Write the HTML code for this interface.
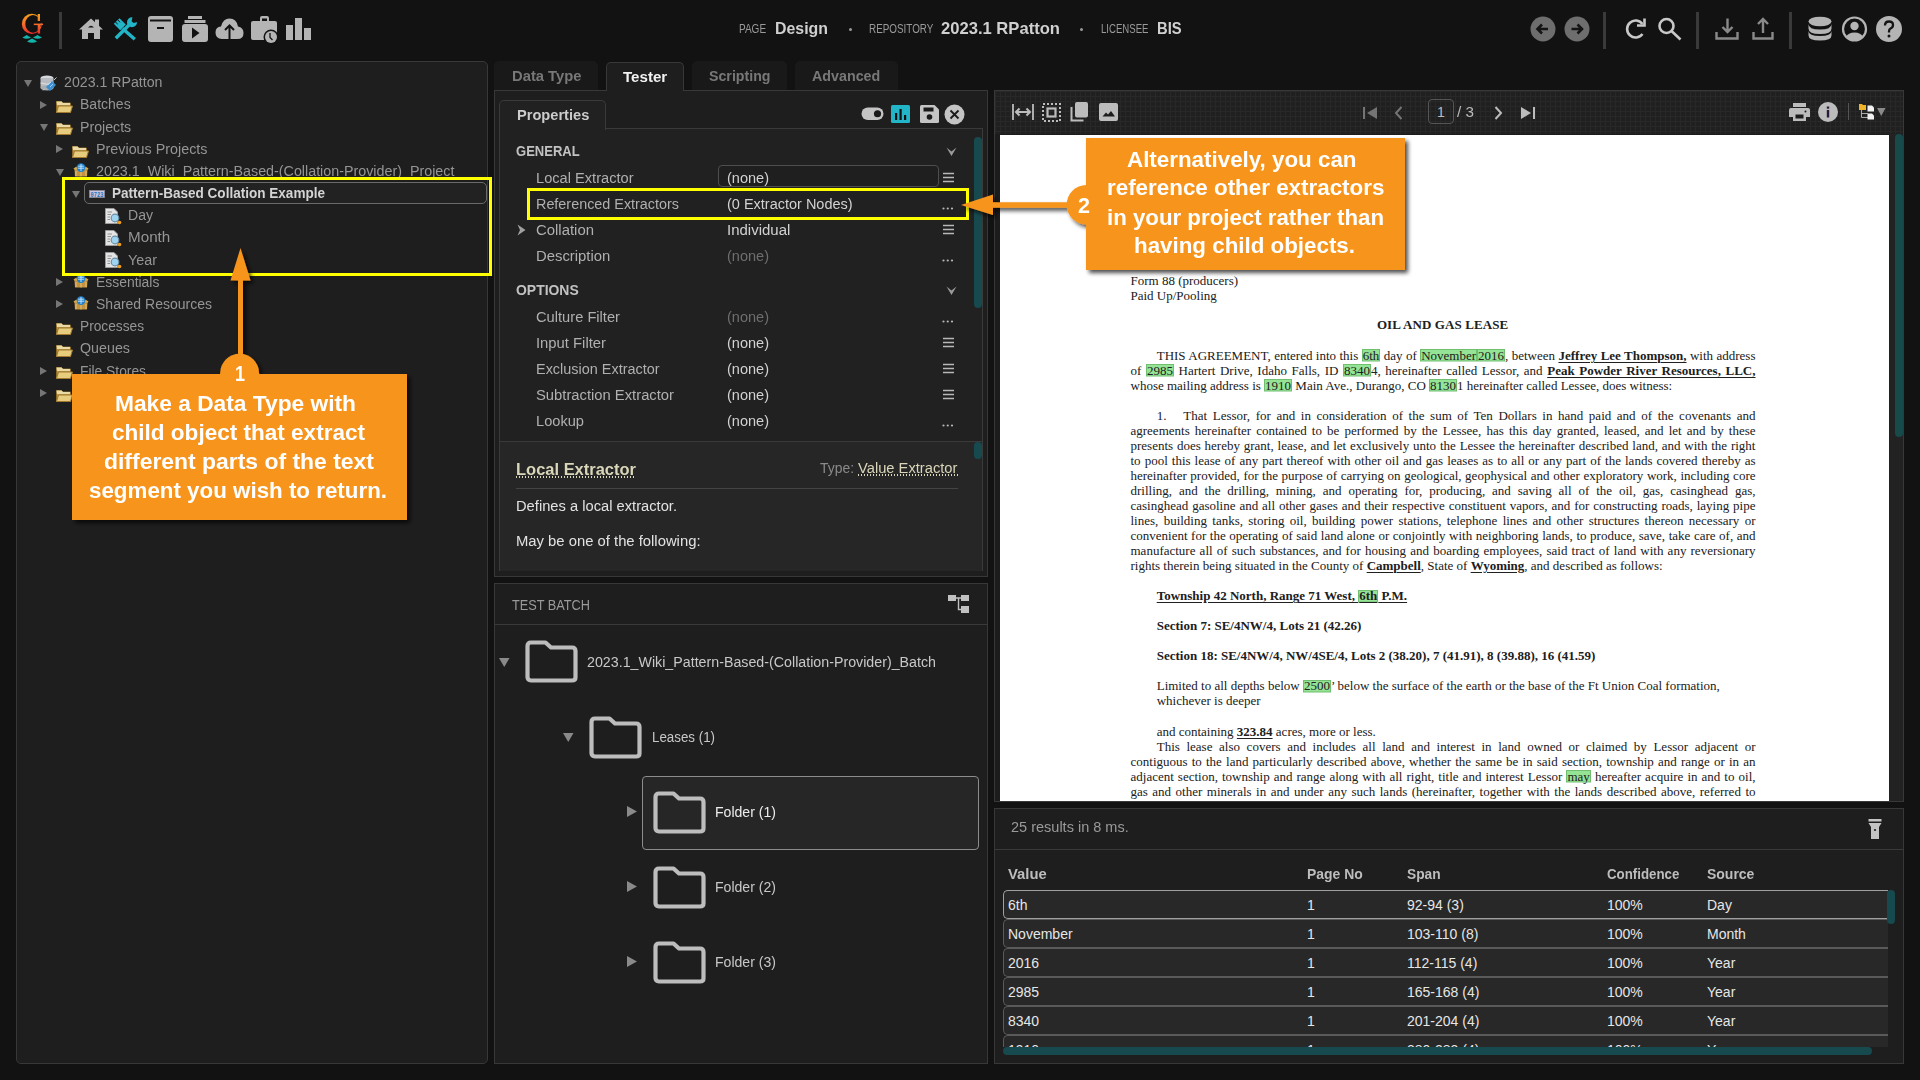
<!DOCTYPE html>
<html><head><meta charset="utf-8">
<style>
*{box-sizing:border-box;margin:0;padding:0}
html,body{width:1920px;height:1080px;overflow:hidden;background:#121212;font-family:"Liberation Sans",sans-serif;color:#aaa;position:relative}
.a{position:absolute}
.t{position:absolute;white-space:pre;transform-origin:0 50%}
svg{position:absolute;overflow:visible}
.grid{background-color:#202020;background-image:linear-gradient(#282828 1px,transparent 1px),linear-gradient(90deg,#282828 1px,transparent 1px);background-size:5px 5px}
.dl{position:absolute;white-space:nowrap;font-family:'Liberation Serif',serif;font-size:13px;line-height:16px;color:#202020}
.dj{text-align:justify;text-align-last:justify;white-space:normal}
.hl{background-image:linear-gradient(#95e395,#95e395),linear-gradient(#6fbf6f,#6fbf6f);background-size:calc(100% - 2px) 10.5px,100% 12.5px;background-position:1px 2.5px,0 1.5px;background-repeat:no-repeat;padding:0 1px}
.bu{font-weight:700;text-decoration:underline;text-decoration-thickness:1px;text-underline-offset:1.5px}
</style></head><body>
<div class="a" style="left:16px;top:61px;width:472px;height:1003px;background:#1e1e1e;border:1px solid #383838;border-radius:5px"></div>
<div class="a" style="left:494px;top:90px;width:494px;height:487px;background:#1e1e1e;border:1px solid #383838"></div>
<div class="a" style="left:494px;top:61px;width:104px;height:29px;background:#191919;border-radius:5px 5px 0 0"></div>
<span id="w0" class="t" style="left:511.50px;top:67.15px;font-size:14px;line-height:18px;font-weight:700;color:#787878;font-family:'Liberation Sans',sans-serif;transform:scaleX(1.0550);">Data Type</span>
<div class="a" style="left:606px;top:62px;width:78px;height:29px;background:#1e1e1e;border:1px solid #383838;border-bottom:none;border-radius:5px 5px 0 0;z-index:2"></div>
<span id="w1" class="t" style="left:622.80px;top:68.15px;font-size:14px;line-height:18px;font-weight:700;color:#f2f2f2;font-family:'Liberation Sans',sans-serif;transform:scaleX(1.0785);z-index:3">Tester</span>
<div class="a" style="left:692px;top:61px;width:95px;height:29px;background:#191919;border-radius:5px 5px 0 0"></div>
<span id="w2" class="t" style="left:708.70px;top:67.15px;font-size:14px;line-height:18px;font-weight:700;color:#787878;font-family:'Liberation Sans',sans-serif;transform:scaleX(1.0136);">Scripting</span>
<div class="a" style="left:795px;top:61px;width:103px;height:29px;background:#191919;border-radius:5px 5px 0 0"></div>
<span id="w3" class="t" style="left:811.80px;top:67.15px;font-size:14px;line-height:18px;font-weight:700;color:#787878;font-family:'Liberation Sans',sans-serif;transform:scaleX(1.0206);">Advanced</span>
<div class="a" style="left:494px;top:583px;width:494px;height:481px;background:#1e1e1e;border:1px solid #383838"></div>
<div class="a" style="left:994px;top:90px;width:910px;height:712px;background:#1e1e1e;border:1px solid #383838"></div>
<div class="a" style="left:994px;top:808px;width:910px;height:256px;background:#1e1e1e;border:1px solid #383838"></div>
<svg style="left:14px;top:8px" width="36" height="40" viewBox="0 0 36 40">
<defs><linearGradient id="lg" gradientUnits="userSpaceOnUse" x1="0" y1="5.5" x2="0" y2="26"><stop offset="0" stop-color="#f8a31c"/><stop offset="0.5" stop-color="#f6702a"/><stop offset="1" stop-color="#ea2a2a"/></linearGradient></defs>
<g fill="url(#lg)"><ellipse cx="17.8" cy="15.9" rx="10" ry="10.2"/></g>
<ellipse cx="19" cy="15.9" rx="7.7" ry="8.8" fill="#121212"/>
<rect x="23.2" y="8.6" width="7" height="6.9" fill="#121212"/>
<g fill="url(#lg)"><rect x="23.7" y="6" width="2.3" height="7"/><rect x="19.8" y="15.6" width="9.2" height="1.5"/><rect x="23.7" y="17" width="2.4" height="8.6"/></g>
<path d="M8.3 29.6 Q11 28 12.65 26.9 Q14.3 28 17 29.6 Q12.65 32 8.3 29.6Z M19 29.6 Q21.7 28 23.5 26.9 Q25.3 28 28 29.6 Q23.5 32 19 29.6Z M13 33.5 Q15.8 31.8 18.05 30.6 Q20.3 31.8 23.1 33.5 Q18.05 36 13 33.5Z" fill="#14b3a8"/>
</svg>
<div class="a" style="left:59px;top:12px;width:3px;height:37px;background:#3a3a3a"></div>
<svg style="left:78px;top:17px" width="26" height="23" viewBox="0 0 26 23"><path d="M1 12.5 L13 1.5 L25 12.5 L22 12.5 L22 22 L16 22 L16 16 L10 16 L10 22 L4 22 L4 12.5Z" fill="#b4b4b4"/><rect x="17" y="2.5" width="4" height="7" fill="#b4b4b4"/><path d="M10 10.5 Q13 7 16 10.5Z" fill="#121212"/></svg>
<svg style="left:113px;top:17px" width="25" height="24" viewBox="0 0 25 24"><path d="M2.8 21.2 L16.5 7.5" stroke="#22b5c8" stroke-width="3.4"/><circle cx="19" cy="5.2" r="5" fill="#22b5c8"/><path d="M19.5 0 L24.5 0 L24.5 5 L20.5 6 L18.6 4.2Z" fill="#121212"/><path d="M9.5 11.5 L21.8 22.2" stroke="#22b5c8" stroke-width="3.4"/><path d="M0.8 6.8 L6.5 1.2 L12.8 7.5 L7.2 13.2Z" fill="#22b5c8"/><path d="M2.2 4.8 L4.8 7.2 M4.6 2.8 L7.2 5.2" stroke="#121212" stroke-width="1"/></svg>
<svg style="left:147px;top:15px" width="27" height="28" viewBox="0 0 27 28"><rect x="1" y="1" width="25" height="26" rx="3" fill="#b4b4b4"/><rect x="3" y="4.5" width="21" height="2" fill="#121212"/><rect x="10" y="12" width="7" height="2" fill="#121212"/></svg>
<svg style="left:181px;top:15px" width="28" height="28" viewBox="0 0 28 28"><rect x="7" y="1" width="14" height="3" fill="#b4b4b4"/><rect x="3.5" y="5" width="21" height="3" fill="#b4b4b4"/><rect x="1" y="9" width="26" height="18" rx="3" fill="#b4b4b4"/><path d="M11 12.5 L18.5 18 L11 23.5Z" fill="#121212"/></svg>
<svg style="left:214px;top:17px" width="31" height="23" viewBox="0 0 31 23"><path d="M8 22 Q1.5 22 1.5 15.5 Q1.5 10 7 9.5 Q9 1.5 15.5 1.5 Q22.5 1.5 24 9.5 Q29.5 10.5 29.5 16 Q29.5 22 23.5 22Z" fill="#b4b4b4"/><path d="M15.5 22 L15.5 8.5 M11 13 L15.5 8.5 L20 13" stroke="#121212" stroke-width="2" fill="none"/></svg>
<svg style="left:250px;top:15px" width="29" height="29" viewBox="0 0 29 29"><path d="M10 6 L10 3 Q10 1 12 1 L17 1 Q19 1 19 3 L19 6 L17 6 L17 3.5 L12 3.5 L12 6Z" fill="#b4b4b4"/><rect x="1" y="6" width="26" height="19" rx="2" fill="#b4b4b4"/><circle cx="21" cy="22" r="7.5" fill="#121212"/><circle cx="21" cy="22" r="6" fill="#b4b4b4"/><path d="M20 18 L20 22.5 L22.5 25" stroke="#121212" stroke-width="1.3" fill="none"/></svg>
<svg style="left:285px;top:17px" width="28" height="24" viewBox="0 0 28 24"><rect x="1" y="8" width="7" height="15" fill="#b4b4b4"/><rect x="10" y="1" width="7" height="22" fill="#b4b4b4"/><rect x="19" y="11" width="7" height="12" fill="#b4b4b4"/></svg>
<span id="w4" class="t" style="left:739.30px;top:21.34px;font-size:12px;line-height:16px;font-weight:400;color:#9a9a9a;font-family:'Liberation Sans',sans-serif;transform:scaleX(0.8346);">PAGE</span>
<span id="w5" class="t" style="left:775.30px;top:17.81px;font-size:17px;line-height:22px;font-weight:700;color:#d0d0d0;font-family:'Liberation Sans',sans-serif;transform:scaleX(0.9350);">Design</span>
<div class="a" style="left:849px;top:28px;width:3px;height:3px;background:#9a9a9a;border-radius:50%"></div>
<span id="w6" class="t" style="left:868.60px;top:21.34px;font-size:12px;line-height:16px;font-weight:400;color:#9a9a9a;font-family:'Liberation Sans',sans-serif;transform:scaleX(0.8230);">REPOSITORY</span>
<span id="w7" class="t" style="left:941.00px;top:17.81px;font-size:17px;line-height:22px;font-weight:700;color:#d0d0d0;font-family:'Liberation Sans',sans-serif;transform:scaleX(0.9763);">2023.1 RPatton</span>
<div class="a" style="left:1080px;top:28px;width:3px;height:3px;background:#9a9a9a;border-radius:50%"></div>
<span id="w8" class="t" style="left:1100.50px;top:21.34px;font-size:12px;line-height:16px;font-weight:400;color:#9a9a9a;font-family:'Liberation Sans',sans-serif;transform:scaleX(0.8002);">LICENSEE</span>
<span id="w9" class="t" style="left:1157.00px;top:17.81px;font-size:17px;line-height:22px;font-weight:700;color:#d0d0d0;font-family:'Liberation Sans',sans-serif;transform:scaleX(0.8679);">BIS</span>
<svg style="left:0;top:0" width="1920" height="60"><circle cx="1543" cy="29" r="12.5" fill="#6e6e6e"/><path d="M1548 29 L1537.5 29 M1542 24.5 L1537.5 29 L1542 33.5" stroke="#141414" stroke-width="2.6" fill="none"/></svg>
<svg style="left:0;top:0" width="1920" height="60"><circle cx="1577" cy="29" r="12.5" fill="#6e6e6e"/><path d="M1571.5 29 L1582 29 M1577.5 24.5 L1582 29 L1577.5 33.5" stroke="#141414" stroke-width="2.6" fill="none"/></svg>
<div class="a" style="left:1603px;top:12px;width:3px;height:37px;background:#3a3a3a"></div>
<svg style="left:1623px;top:17px" width="26" height="25" viewBox="0 0 26 25"><path d="M19.5 17 A8.5 8.5 0 1 1 19.5 7" stroke="#c8c8c8" stroke-width="2.6" fill="none"/><path d="M14 8.5 L21.5 8.5 L21.5 1.5" stroke="#c8c8c8" stroke-width="2.6" fill="none"/></svg>
<svg style="left:1657px;top:17px" width="26" height="25" viewBox="0 0 26 25"><circle cx="9.5" cy="9" r="7" stroke="#c8c8c8" stroke-width="2.6" fill="none"/><path d="M14.5 14 L23.5 22.5" stroke="#c8c8c8" stroke-width="2.6"/></svg>
<div class="a" style="left:1696px;top:12px;width:3px;height:37px;background:#3a3a3a"></div>
<svg style="left:1714px;top:17px" width="26" height="24" viewBox="0 0 26 24"><path d="M13.5 1.5 L13.5 15 M8.5 10 L13.5 15 L18.5 10" stroke="#8a8a8a" stroke-width="2.4" fill="none"/><path d="M2.5 15 L2.5 21.5 L23.5 21.5 L23.5 15" stroke="#8a8a8a" stroke-width="2.4" fill="none"/></svg>
<svg style="left:1752px;top:17px" width="26" height="24" viewBox="0 0 26 24"><path d="M11 2 L11 16 M6 7 L11 2 L16 7" stroke="#8a8a8a" stroke-width="2.4" fill="none"/><path d="M1.5 15 L1.5 21.5 L20.5 21.5 L20.5 15" stroke="#8a8a8a" stroke-width="2.4" fill="none"/></svg>
<div class="a" style="left:1789px;top:12px;width:3px;height:37px;background:#3a3a3a"></div>
<svg style="left:1807px;top:16px" width="27" height="26" viewBox="0 0 27 26"><ellipse cx="13" cy="5.5" rx="11.5" ry="4.8" fill="#b4b4b4"/><path d="M1.5 8 Q1.5 13.5 13 13.5 Q24.5 13.5 24.5 8 L24.5 12.5 Q24.5 18 13 18 Q1.5 18 1.5 12.5Z" fill="#b4b4b4"/><path d="M1.5 15 Q1.5 20 13 20 Q24.5 20 24.5 15 L24.5 19.5 Q24.5 24.5 13 24.5 Q1.5 24.5 1.5 19.5Z" fill="#b4b4b4"/></svg>
<svg style="left:1841px;top:16px" width="27" height="27" viewBox="0 0 27 27"><circle cx="13.5" cy="13" r="11.5" stroke="#b4b4b4" stroke-width="2.2" fill="none"/><circle cx="13.5" cy="10" r="4.2" fill="#b4b4b4"/><path d="M5 21 Q7 16.5 13.5 16.5 Q20 16.5 22 21 Q18.5 24.5 13.5 24.5 Q8.5 24.5 5 21Z" fill="#b4b4b4"/></svg>
<svg style="left:1875px;top:15px" width="28" height="28" viewBox="0 0 28 28"><circle cx="14" cy="14" r="13" fill="#b4b4b4"/><path d="M10 10.5 Q10 6.5 14 6.5 Q18 6.5 18 10 Q18 12.5 15.5 13.5 Q14 14.2 14 16.5 L14 17.5" stroke="#141414" stroke-width="2.3" fill="none"/><circle cx="14" cy="21" r="1.5" fill="#141414"/></svg>
<svg style="left:24px;top:80.0px" width="8" height="7" viewBox="0 0 8 7"><path d="M0 0 L8 0 L4 7Z" fill="#767676"/></svg>
<svg style="left:40px;top:75.0px" width="17" height="16" viewBox="0 0 17 16"><ellipse cx="7" cy="3" rx="6.5" ry="2.5" fill="#d4d8dc"/><rect x="0.5" y="3" width="13" height="10" fill="#b8bcc0"/><ellipse cx="7" cy="13" rx="6.5" ry="2.5" fill="#a8acb0"/><path d="M0.5 8 Q7 10.5 13.5 8" stroke="#e8e8e8" stroke-width="0.8" fill="none"/><path d="M6 12 L12 6 L16 10 L10 16Z" fill="#3b8fd0"/><path d="M8 10 L11 7 M10 12 L13 9" stroke="#bfe0ff" stroke-width="0.8"/><path d="M14 5 L16.5 2.5 M5 13.5 L3 15.5" stroke="#ccc" stroke-width="1"/></svg>
<span id="w10" class="t" style="left:64.00px;top:73.15px;font-size:14px;line-height:18px;font-weight:400;color:#959595;font-family:'Liberation Sans',sans-serif;transform:scaleX(1.0124);">2023.1 RPatton</span>
<svg style="left:40px;top:100.69px" width="7" height="8" viewBox="0 0 7 8"><path d="M0 0 L7 4 L0 8Z" fill="#767676"/></svg>
<svg style="left:56px;top:100.19px" width="17" height="13" viewBox="0 0 17 13"><path d="M0.5 1.5 L5.5 1.5 L7 3 L14.5 3 L14.5 12.5 L0.5 12.5Z" fill="#b8923e" stroke="#8c6a25" stroke-width="1"/><path d="M0.5 1.5 L5.5 1.5 L7 3 L14 3 L14 5 L1 5 Z" fill="#e9d9a6"/><path d="M2.5 6 L16.5 6 L14.5 12.5 L0.5 12.5Z" fill="#e7cc7e" stroke="#a07a30" stroke-width="1"/></svg>
<span id="w11" class="t" style="left:80.00px;top:95.34px;font-size:14px;line-height:18px;font-weight:400;color:#959595;font-family:'Liberation Sans',sans-serif;transform:scaleX(1.0021);">Batches</span>
<svg style="left:40px;top:124.38px" width="8" height="7" viewBox="0 0 8 7"><path d="M0 0 L8 0 L4 7Z" fill="#767676"/></svg>
<svg style="left:56px;top:122.38px" width="17" height="13" viewBox="0 0 17 13"><path d="M0.5 1.5 L5.5 1.5 L7 3 L14.5 3 L14.5 12.5 L0.5 12.5Z" fill="#b8923e" stroke="#8c6a25" stroke-width="1"/><path d="M0.5 1.5 L5.5 1.5 L7 3 L14 3 L14 5 L1 5 Z" fill="#e9d9a6"/><path d="M2.5 6 L16.5 6 L14.5 12.5 L0.5 12.5Z" fill="#e7cc7e" stroke="#a07a30" stroke-width="1"/></svg>
<span id="w12" class="t" style="left:80.00px;top:117.53px;font-size:14px;line-height:18px;font-weight:400;color:#959595;font-family:'Liberation Sans',sans-serif;transform:scaleX(1.0123);">Projects</span>
<svg style="left:56px;top:145.07px" width="7" height="8" viewBox="0 0 7 8"><path d="M0 0 L7 4 L0 8Z" fill="#767676"/></svg>
<svg style="left:72px;top:144.57px" width="17" height="13" viewBox="0 0 17 13"><path d="M0.5 1.5 L5.5 1.5 L7 3 L14.5 3 L14.5 12.5 L0.5 12.5Z" fill="#b8923e" stroke="#8c6a25" stroke-width="1"/><path d="M0.5 1.5 L5.5 1.5 L7 3 L14 3 L14 5 L1 5 Z" fill="#e9d9a6"/><path d="M2.5 6 L16.5 6 L14.5 12.5 L0.5 12.5Z" fill="#e7cc7e" stroke="#a07a30" stroke-width="1"/></svg>
<span id="w13" class="t" style="left:96.00px;top:139.72px;font-size:14px;line-height:18px;font-weight:400;color:#959595;font-family:'Liberation Sans',sans-serif;transform:scaleX(1.0235);">Previous Projects</span>
<svg style="left:56px;top:168.76px" width="8" height="7" viewBox="0 0 8 7"><path d="M0 0 L8 0 L4 7Z" fill="#767676"/></svg>
<svg style="left:72.5px;top:163.26px" width="16" height="14" viewBox="0 0 16 14"><path d="M0.5 5.5 L3.5 3.5 L5.5 6.5 L2.5 8Z" fill="#d9a94a"/><path d="M15.5 5.5 L12.5 3.5 L10.5 6.5 L13.5 8Z" fill="#d9a94a"/><path d="M1.5 6.5 L14.5 6.5 L14 13.5 L2 13.5Z" fill="#c49342"/><path d="M3 8 V13 M8 8 V13.5 M13 8 V13" stroke="#e8c77a" stroke-width="0.9"/><circle cx="8" cy="4.6" r="4.3" fill="#1f7fc8"/><path d="M5.2 3.2 H10.8 M4.8 5.2 H11.2 M8 1 V8" stroke="#cfeaff" stroke-width="0.9" fill="none"/></svg>
<span id="w14" class="t" style="left:96.00px;top:161.91px;font-size:14px;line-height:18px;font-weight:400;color:#959595;font-family:'Liberation Sans',sans-serif;transform:scaleX(1.0213);">2023.1_Wiki_Pattern-Based-(Collation-Provider)_Project</span>
<div class="a" style="left:84px;top:182px;width:403px;height:22px;border:1px solid #6a6a6a;border-radius:5px;background:#222"></div>
<svg style="left:72px;top:190.95px" width="8" height="7" viewBox="0 0 8 7"><path d="M0 0 L8 0 L4 7Z" fill="#767676"/></svg>
<svg style="left:89px;top:190.45px" width="16" height="8" viewBox="0 0 16 8"><rect x="0.5" y="0.5" width="15" height="7" fill="#cbc5e3" stroke="#8a8a9a" stroke-width="0.8"/><text x="1.5" y="6.6" font-family="Liberation Mono" font-size="7" font-weight="700" fill="#1f6fb0" textLength="13" lengthAdjust="spacingAndGlyphs">0723</text></svg>
<span id="w15" class="t" style="left:112.00px;top:184.10px;font-size:14px;line-height:18px;font-weight:700;color:#d4d4d4;font-family:'Liberation Sans',sans-serif;transform:scaleX(0.9674);">Pattern-Based Collation Example</span>
<svg style="left:104.5px;top:207.64000000000001px" width="17" height="16" viewBox="0 0 17 16"><path d="M0.5 0.5 L9 0.5 L12.5 4 L12.5 15.5 L0.5 15.5Z" fill="#e4e4e4" stroke="#9a9a9a" stroke-width="1"/><path d="M2.5 4 L7 4 M2.5 6.5 L6 6.5 M2.5 9 L5 9 M2.5 11.5 L5 11.5" stroke="#888" stroke-width="0.9"/><circle cx="10" cy="10" r="3.8" fill="#9fd4f0" stroke="#6a8fa8" stroke-width="1.2"/><circle cx="14.5" cy="14.5" r="1.8" fill="#f0a020"/></svg>
<span id="w16" class="t" style="left:128.00px;top:206.29px;font-size:14px;line-height:18px;font-weight:400;color:#959595;font-family:'Liberation Sans',sans-serif;transform:scaleX(1.0038);">Day</span>
<svg style="left:104.5px;top:229.83px" width="17" height="16" viewBox="0 0 17 16"><path d="M0.5 0.5 L9 0.5 L12.5 4 L12.5 15.5 L0.5 15.5Z" fill="#e4e4e4" stroke="#9a9a9a" stroke-width="1"/><path d="M2.5 4 L7 4 M2.5 6.5 L6 6.5 M2.5 9 L5 9 M2.5 11.5 L5 11.5" stroke="#888" stroke-width="0.9"/><circle cx="10" cy="10" r="3.8" fill="#9fd4f0" stroke="#6a8fa8" stroke-width="1.2"/><circle cx="14.5" cy="14.5" r="1.8" fill="#f0a020"/></svg>
<span id="w17" class="t" style="left:128.00px;top:228.48px;font-size:14px;line-height:18px;font-weight:400;color:#959595;font-family:'Liberation Sans',sans-serif;transform:scaleX(1.0868);">Month</span>
<svg style="left:104.5px;top:252.01999999999998px" width="17" height="16" viewBox="0 0 17 16"><path d="M0.5 0.5 L9 0.5 L12.5 4 L12.5 15.5 L0.5 15.5Z" fill="#e4e4e4" stroke="#9a9a9a" stroke-width="1"/><path d="M2.5 4 L7 4 M2.5 6.5 L6 6.5 M2.5 9 L5 9 M2.5 11.5 L5 11.5" stroke="#888" stroke-width="0.9"/><circle cx="10" cy="10" r="3.8" fill="#9fd4f0" stroke="#6a8fa8" stroke-width="1.2"/><circle cx="14.5" cy="14.5" r="1.8" fill="#f0a020"/></svg>
<span id="w18" class="t" style="left:128.00px;top:250.67px;font-size:14px;line-height:18px;font-weight:400;color:#959595;font-family:'Liberation Sans',sans-serif;transform:scaleX(1.0248);">Year</span>
<svg style="left:56px;top:278.21000000000004px" width="7" height="8" viewBox="0 0 7 8"><path d="M0 0 L7 4 L0 8Z" fill="#767676"/></svg>
<svg style="left:72.5px;top:274.21000000000004px" width="16" height="14" viewBox="0 0 16 14"><path d="M0.5 5.5 L3.5 3.5 L5.5 6.5 L2.5 8Z" fill="#d9a94a"/><path d="M15.5 5.5 L12.5 3.5 L10.5 6.5 L13.5 8Z" fill="#d9a94a"/><path d="M1.5 6.5 L14.5 6.5 L14 13.5 L2 13.5Z" fill="#c49342"/><path d="M3 8 V13 M8 8 V13.5 M13 8 V13" stroke="#e8c77a" stroke-width="0.9"/><circle cx="8" cy="4.6" r="4.3" fill="#1f7fc8"/><path d="M5.2 3.2 H10.8 M4.8 5.2 H11.2 M8 1 V8" stroke="#cfeaff" stroke-width="0.9" fill="none"/></svg>
<span id="w19" class="t" style="left:96.00px;top:272.86px;font-size:14px;line-height:18px;font-weight:400;color:#959595;font-family:'Liberation Sans',sans-serif;transform:scaleX(0.9935);">Essentials</span>
<svg style="left:56px;top:300.4px" width="7" height="8" viewBox="0 0 7 8"><path d="M0 0 L7 4 L0 8Z" fill="#767676"/></svg>
<svg style="left:72.5px;top:296.4px" width="16" height="14" viewBox="0 0 16 14"><path d="M0.5 5.5 L3.5 3.5 L5.5 6.5 L2.5 8Z" fill="#d9a94a"/><path d="M15.5 5.5 L12.5 3.5 L10.5 6.5 L13.5 8Z" fill="#d9a94a"/><path d="M1.5 6.5 L14.5 6.5 L14 13.5 L2 13.5Z" fill="#c49342"/><path d="M3 8 V13 M8 8 V13.5 M13 8 V13" stroke="#e8c77a" stroke-width="0.9"/><circle cx="8" cy="4.6" r="4.3" fill="#1f7fc8"/><path d="M5.2 3.2 H10.8 M4.8 5.2 H11.2 M8 1 V8" stroke="#cfeaff" stroke-width="0.9" fill="none"/></svg>
<span id="w20" class="t" style="left:96.00px;top:295.05px;font-size:14px;line-height:18px;font-weight:400;color:#959595;font-family:'Liberation Sans',sans-serif;transform:scaleX(1.0004);">Shared Resources</span>
<svg style="left:56px;top:322.09000000000003px" width="17" height="13" viewBox="0 0 17 13"><path d="M0.5 1.5 L5.5 1.5 L7 3 L14.5 3 L14.5 12.5 L0.5 12.5Z" fill="#b8923e" stroke="#8c6a25" stroke-width="1"/><path d="M0.5 1.5 L5.5 1.5 L7 3 L14 3 L14 5 L1 5 Z" fill="#e9d9a6"/><path d="M2.5 6 L16.5 6 L14.5 12.5 L0.5 12.5Z" fill="#e7cc7e" stroke="#a07a30" stroke-width="1"/></svg>
<span id="w21" class="t" style="left:80.00px;top:317.24px;font-size:14px;line-height:18px;font-weight:400;color:#959595;font-family:'Liberation Sans',sans-serif;transform:scaleX(0.9792);">Processes</span>
<svg style="left:56px;top:344.28000000000003px" width="17" height="13" viewBox="0 0 17 13"><path d="M0.5 1.5 L5.5 1.5 L7 3 L14.5 3 L14.5 12.5 L0.5 12.5Z" fill="#b8923e" stroke="#8c6a25" stroke-width="1"/><path d="M0.5 1.5 L5.5 1.5 L7 3 L14 3 L14 5 L1 5 Z" fill="#e9d9a6"/><path d="M2.5 6 L16.5 6 L14.5 12.5 L0.5 12.5Z" fill="#e7cc7e" stroke="#a07a30" stroke-width="1"/></svg>
<span id="w22" class="t" style="left:80.00px;top:339.43px;font-size:14px;line-height:18px;font-weight:400;color:#959595;font-family:'Liberation Sans',sans-serif;transform:scaleX(1.0194);">Queues</span>
<svg style="left:40px;top:366.97px" width="7" height="8" viewBox="0 0 7 8"><path d="M0 0 L7 4 L0 8Z" fill="#767676"/></svg>
<svg style="left:56px;top:366.47px" width="17" height="13" viewBox="0 0 17 13"><path d="M0.5 1.5 L5.5 1.5 L7 3 L14.5 3 L14.5 12.5 L0.5 12.5Z" fill="#b8923e" stroke="#8c6a25" stroke-width="1"/><path d="M0.5 1.5 L5.5 1.5 L7 3 L14 3 L14 5 L1 5 Z" fill="#e9d9a6"/><path d="M2.5 6 L16.5 6 L14.5 12.5 L0.5 12.5Z" fill="#e7cc7e" stroke="#a07a30" stroke-width="1"/></svg>
<span id="w23" class="t" style="left:80.00px;top:361.62px;font-size:14px;line-height:18px;font-weight:400;color:#959595;font-family:'Liberation Sans',sans-serif;transform:scaleX(0.9862);">File Stores</span>
<svg style="left:40px;top:389.16px" width="7" height="8" viewBox="0 0 7 8"><path d="M0 0 L7 4 L0 8Z" fill="#767676"/></svg>
<svg style="left:56px;top:388.66px" width="17" height="13" viewBox="0 0 17 13"><path d="M0.5 1.5 L5.5 1.5 L7 3 L14.5 3 L14.5 12.5 L0.5 12.5Z" fill="#b8923e" stroke="#8c6a25" stroke-width="1"/><path d="M0.5 1.5 L5.5 1.5 L7 3 L14 3 L14 5 L1 5 Z" fill="#e9d9a6"/><path d="M2.5 6 L16.5 6 L14.5 12.5 L0.5 12.5Z" fill="#e7cc7e" stroke="#a07a30" stroke-width="1"/></svg>
<span id="w24" class="t" style="left:80.00px;top:383.81px;font-size:14px;line-height:18px;font-weight:400;color:#959595;font-family:'Liberation Sans',sans-serif;transform:scaleX(0.9704);">Data Connections</span>
<div class="a" style="left:499px;top:128px;width:484px;height:443px;background:#212121;border:1px solid #3a3a3a;border-top:none"></div>
<div class="a" style="left:606px;top:128px;width:377px;height:1px;background:#3a3a3a"></div>
<div class="a" style="left:499px;top:100px;width:107px;height:30px;background:#212121;border:1px solid #3a3a3a;border-bottom:none;border-radius:5px 5px 0 0"></div>
<span id="w25" class="t" style="left:516.70px;top:105.85px;font-size:14px;line-height:18px;font-weight:700;color:#cccccc;font-family:'Liberation Sans',sans-serif;transform:scaleX(1.0440);">Properties</span>
<svg style="left:861px;top:107px" width="23" height="14" viewBox="0 0 23 14"><rect x="0.5" y="0.5" width="22" height="12.5" rx="6.25" fill="#c4c4c4"/><circle cx="16.5" cy="6.75" r="3.6" fill="#1a1a1a"/></svg>
<svg style="left:891px;top:105px" width="19" height="18" viewBox="0 0 19 18"><rect x="0" y="0" width="19" height="18" rx="1.5" fill="#22b5c8"/><rect x="4" y="8" width="2.2" height="7" fill="#111"/><rect x="8.5" y="4" width="2.2" height="11" fill="#111"/><rect x="13" y="10" width="2.2" height="5" fill="#111"/></svg>
<svg style="left:920px;top:105px" width="19" height="18" viewBox="0 0 19 18"><path d="M0 1.5 Q0 0 1.5 0 L14.5 0 L19 4.5 L19 16.5 Q19 18 17.5 18 L1.5 18 Q0 18 0 16.5Z" fill="#c4c4c4"/><rect x="3.5" y="2.5" width="10" height="4" fill="#1a1a1a"/><circle cx="9.5" cy="12" r="2.8" fill="#1a1a1a"/></svg>
<svg style="left:944px;top:104px" width="21" height="21" viewBox="0 0 21 21"><circle cx="10.5" cy="10.5" r="10" fill="#c4c4c4"/><path d="M6.5 6.5 L14.5 14.5 M14.5 6.5 L6.5 14.5" stroke="#1a1a1a" stroke-width="1.8"/></svg>
<span id="w26" class="t" style="left:516.20px;top:142.15px;font-size:14px;line-height:18px;font-weight:700;color:#c2c2c2;font-family:'Liberation Sans',sans-serif;transform:scaleX(0.9306);">GENERAL</span>
<svg style="left:946px;top:147px" width="11" height="10" viewBox="0 0 11 10"><path d="M0.5 0.5 L5.5 9 L10.5 0.5 L5.5 4.5Z" fill="#9a9a9a"/></svg>
<div class="a" style="left:718px;top:165px;width:221px;height:22px;border:1px solid #4e4e4e;border-radius:4px;background:#1f1f1f"></div>
<span id="w27" class="t" style="left:536.30px;top:169.35px;font-size:14px;line-height:18px;font-weight:400;color:#b0b0b0;font-family:'Liberation Sans',sans-serif;transform:scaleX(1.0442);">Local Extractor</span>
<span id="w28" class="t" style="left:726.90px;top:169.35px;font-size:14px;line-height:18px;font-weight:400;color:#d2d2d2;font-family:'Liberation Sans',sans-serif;transform:scaleX(1.0378);">(none)</span>
<svg style="left:942.5px;top:172.2px" width="11" height="11" viewBox="0 0 11 11"><path d="M0 1.5 H11 M0 5.5 H11 M0 9.5 H11" stroke="#b8b8b8" stroke-width="1.3"/></svg>
<span id="w29" class="t" style="left:536.30px;top:195.15px;font-size:14px;line-height:18px;font-weight:400;color:#b0b0b0;font-family:'Liberation Sans',sans-serif;transform:scaleX(1.0266);">Referenced Extractors</span>
<span id="w30" class="t" style="left:726.90px;top:195.15px;font-size:14px;line-height:18px;font-weight:400;color:#d2d2d2;font-family:'Liberation Sans',sans-serif;transform:scaleX(1.0348);">(0 Extractor Nodes)</span>
<svg style="left:942px;top:207.0px" width="12" height="3" viewBox="0 0 12 3"><circle cx="1.5" cy="1.5" r="1.1" fill="#b8b8b8"/><circle cx="5.75" cy="1.5" r="1.1" fill="#b8b8b8"/><circle cx="10" cy="1.5" r="1.1" fill="#b8b8b8"/></svg>
<span id="w31" class="t" style="left:536.30px;top:221.15px;font-size:14px;line-height:18px;font-weight:400;color:#b0b0b0;font-family:'Liberation Sans',sans-serif;transform:scaleX(1.0645);">Collation</span>
<span id="w32" class="t" style="left:726.90px;top:221.15px;font-size:14px;line-height:18px;font-weight:400;color:#d2d2d2;font-family:'Liberation Sans',sans-serif;transform:scaleX(1.0700);">Individual</span>
<svg style="left:942.5px;top:224.0px" width="11" height="11" viewBox="0 0 11 11"><path d="M0 1.5 H11 M0 5.5 H11 M0 9.5 H11" stroke="#b8b8b8" stroke-width="1.3"/></svg>
<span id="w33" class="t" style="left:536.30px;top:247.15px;font-size:14px;line-height:18px;font-weight:400;color:#b0b0b0;font-family:'Liberation Sans',sans-serif;transform:scaleX(1.0610);">Description</span>
<span id="w34" class="t" style="left:726.90px;top:247.15px;font-size:14px;line-height:18px;font-weight:400;color:#6e6e6e;font-family:'Liberation Sans',sans-serif;transform:scaleX(1.0378);">(none)</span>
<svg style="left:942px;top:259.0px" width="12" height="3" viewBox="0 0 12 3"><circle cx="1.5" cy="1.5" r="1.1" fill="#b8b8b8"/><circle cx="5.75" cy="1.5" r="1.1" fill="#b8b8b8"/><circle cx="10" cy="1.5" r="1.1" fill="#b8b8b8"/></svg>
<svg style="left:517px;top:224px" width="9" height="12" viewBox="0 0 9 12"><path d="M0.5 0.5 L8.5 6 L0.5 11.5 L3 6Z" fill="#a0a0a0"/></svg>
<span id="w35" class="t" style="left:516.40px;top:281.45px;font-size:14px;line-height:18px;font-weight:700;color:#c2c2c2;font-family:'Liberation Sans',sans-serif;transform:scaleX(0.9950);">OPTIONS</span>
<svg style="left:946px;top:286px" width="11" height="10" viewBox="0 0 11 10"><path d="M0.5 0.5 L5.5 9 L10.5 0.5 L5.5 4.5Z" fill="#9a9a9a"/></svg>
<span id="w36" class="t" style="left:536.30px;top:308.15px;font-size:14px;line-height:18px;font-weight:400;color:#b0b0b0;font-family:'Liberation Sans',sans-serif;transform:scaleX(1.0482);">Culture Filter</span>
<span id="w37" class="t" style="left:726.90px;top:308.15px;font-size:14px;line-height:18px;font-weight:400;color:#6e6e6e;font-family:'Liberation Sans',sans-serif;transform:scaleX(1.0378);">(none)</span>
<svg style="left:942px;top:320.0px" width="12" height="3" viewBox="0 0 12 3"><circle cx="1.5" cy="1.5" r="1.1" fill="#b8b8b8"/><circle cx="5.75" cy="1.5" r="1.1" fill="#b8b8b8"/><circle cx="10" cy="1.5" r="1.1" fill="#b8b8b8"/></svg>
<span id="w38" class="t" style="left:536.30px;top:334.15px;font-size:14px;line-height:18px;font-weight:400;color:#b0b0b0;font-family:'Liberation Sans',sans-serif;transform:scaleX(1.0584);">Input Filter</span>
<span id="w39" class="t" style="left:726.90px;top:334.15px;font-size:14px;line-height:18px;font-weight:400;color:#d2d2d2;font-family:'Liberation Sans',sans-serif;transform:scaleX(1.0378);">(none)</span>
<svg style="left:942.5px;top:337.0px" width="11" height="11" viewBox="0 0 11 11"><path d="M0 1.5 H11 M0 5.5 H11 M0 9.5 H11" stroke="#b8b8b8" stroke-width="1.3"/></svg>
<span id="w40" class="t" style="left:536.30px;top:360.05px;font-size:14px;line-height:18px;font-weight:400;color:#b0b0b0;font-family:'Liberation Sans',sans-serif;transform:scaleX(1.0315);">Exclusion Extractor</span>
<span id="w41" class="t" style="left:726.90px;top:360.05px;font-size:14px;line-height:18px;font-weight:400;color:#d2d2d2;font-family:'Liberation Sans',sans-serif;transform:scaleX(1.0378);">(none)</span>
<svg style="left:942.5px;top:362.9px" width="11" height="11" viewBox="0 0 11 11"><path d="M0 1.5 H11 M0 5.5 H11 M0 9.5 H11" stroke="#b8b8b8" stroke-width="1.3"/></svg>
<span id="w42" class="t" style="left:536.30px;top:385.95px;font-size:14px;line-height:18px;font-weight:400;color:#b0b0b0;font-family:'Liberation Sans',sans-serif;transform:scaleX(1.0556);">Subtraction Extractor</span>
<span id="w43" class="t" style="left:726.90px;top:385.95px;font-size:14px;line-height:18px;font-weight:400;color:#d2d2d2;font-family:'Liberation Sans',sans-serif;transform:scaleX(1.0378);">(none)</span>
<svg style="left:942.5px;top:388.8px" width="11" height="11" viewBox="0 0 11 11"><path d="M0 1.5 H11 M0 5.5 H11 M0 9.5 H11" stroke="#b8b8b8" stroke-width="1.3"/></svg>
<span id="w44" class="t" style="left:536.30px;top:411.85px;font-size:14px;line-height:18px;font-weight:400;color:#b0b0b0;font-family:'Liberation Sans',sans-serif;transform:scaleX(1.0449);">Lookup</span>
<span id="w45" class="t" style="left:726.90px;top:411.85px;font-size:14px;line-height:18px;font-weight:400;color:#d2d2d2;font-family:'Liberation Sans',sans-serif;transform:scaleX(1.0378);">(none)</span>
<svg style="left:942px;top:423.7px" width="12" height="3" viewBox="0 0 12 3"><circle cx="1.5" cy="1.5" r="1.1" fill="#b8b8b8"/><circle cx="5.75" cy="1.5" r="1.1" fill="#b8b8b8"/><circle cx="10" cy="1.5" r="1.1" fill="#b8b8b8"/></svg>
<div class="a" style="left:974px;top:137px;width:8px;height:171px;background:#174a4f;border-radius:4px"></div>
<div class="a" style="left:500px;top:441px;width:482px;height:130px;background:#262626;border-top:1px solid #3a3a3a"></div>
<div class="a" style="left:974px;top:442px;width:8px;height:17px;background:#174a4f;border-radius:4px"></div>
<span id="w46" class="t" style="left:516.10px;top:458.66px;font-size:16px;line-height:21px;font-weight:700;color:#d9d6b9;font-family:'Liberation Sans',sans-serif;transform:scaleX(1.0302);">Local Extractor</span>
<div class="a" style="left:516px;top:476px;width:120px;height:2px;background-image:linear-gradient(90deg,#d9d6b9 50%,transparent 50%);background-size:3px 2px"></div>
<span id="w47" class="t" style="left:819.90px;top:458.75px;font-size:14px;line-height:18px;font-weight:400;color:#8a8a8a;font-family:'Liberation Sans',sans-serif;transform:scaleX(0.9927);">Type:</span>
<span id="w48" class="t" style="left:858.00px;top:458.75px;font-size:14px;line-height:18px;font-weight:400;color:#d9d6b9;font-family:'Liberation Sans',sans-serif;transform:scaleX(1.0499);">Value Extractor</span>
<div class="a" style="left:858px;top:474px;width:100px;height:1.5px;background-image:linear-gradient(90deg,#d9d6b9 50%,transparent 50%);background-size:3px 2px"></div>
<div class="a" style="left:516px;top:488px;width:442px;height:1px;background:#444"></div>
<span id="w49" class="t" style="left:516.10px;top:496.95px;font-size:14px;line-height:18px;font-weight:400;color:#e2e2e2;font-family:'Liberation Sans',sans-serif;transform:scaleX(1.0502);">Defines a local extractor.</span>
<span id="w50" class="t" style="left:516.10px;top:532.45px;font-size:14px;line-height:18px;font-weight:400;color:#e2e2e2;font-family:'Liberation Sans',sans-serif;transform:scaleX(1.0583);">May be one of the following:</span>
<span id="w51" class="t" style="left:511.50px;top:596.15px;font-size:14px;line-height:18px;font-weight:400;color:#9a9a9a;font-family:'Liberation Sans',sans-serif;transform:scaleX(0.9088);">TEST BATCH</span>
<svg style="left:948px;top:595px" width="21" height="18" viewBox="0 0 21 18"><rect x="0" y="0" width="8" height="6" fill="#c0c0c0"/><rect x="13" y="0" width="8" height="6" fill="#c0c0c0"/><rect x="13" y="11" width="8" height="7" fill="#c0c0c0"/><path d="M8 3 H13 M10.5 3 V14.5 H13" stroke="#c0c0c0" stroke-width="1.4" fill="none"/></svg>
<div class="a" style="left:495px;top:624px;width:492px;height:1px;background:#3a3a3a"></div>
<svg style="left:499px;top:658px" width="11" height="9" viewBox="0 0 11 9"><path d="M0 0 L10.5 0 L5.25 9Z" fill="#8a8a8a"/></svg>
<svg style="left:524.5px;top:640px" width="53" height="43" viewBox="0 0 53 43"><path d="M2.5 6 Q2.5 2.5 6 2.5 L20.5 2.5 L26 7.5 L47 7.5 Q50.5 7.5 50.5 11 L50.5 37.5 Q50.5 40.5 47 40.5 L6 40.5 Q2.5 40.5 2.5 37 Z" fill="none" stroke="#bdbdbd" stroke-width="4.2" stroke-linejoin="round"/></svg>
<span id="w52" class="t" style="left:587.40px;top:652.75px;font-size:14px;line-height:18px;font-weight:400;color:#c8c8c8;font-family:'Liberation Sans',sans-serif;transform:scaleX(1.0170);">2023.1_Wiki_Pattern-Based-(Collation-Provider)_Batch</span>
<svg style="left:563px;top:732.5px" width="11" height="9" viewBox="0 0 11 9"><path d="M0 0 L10.5 0 L5.25 9Z" fill="#8a8a8a"/></svg>
<svg style="left:588.5px;top:715.5px" width="53" height="43" viewBox="0 0 53 43"><path d="M2.5 6 Q2.5 2.5 6 2.5 L20.5 2.5 L26 7.5 L47 7.5 Q50.5 7.5 50.5 11 L50.5 37.5 Q50.5 40.5 47 40.5 L6 40.5 Q2.5 40.5 2.5 37 Z" fill="none" stroke="#bdbdbd" stroke-width="4.2" stroke-linejoin="round"/></svg>
<span id="w53" class="t" style="left:651.50px;top:728.15px;font-size:14px;line-height:18px;font-weight:400;color:#c8c8c8;font-family:'Liberation Sans',sans-serif;transform:scaleX(0.9523);">Leases (1)</span>
<div class="a" style="left:642px;top:776px;width:337px;height:74px;border:1px solid #8c8c8c;border-radius:4px;background:#262626"></div>
<svg style="left:627px;top:806px" width="10" height="11" viewBox="0 0 10 11"><path d="M0 0 L10 5.5 L0 11Z" fill="#8a8a8a"/></svg>
<svg style="left:652.5px;top:790.5px" width="53" height="43" viewBox="0 0 53 43"><path d="M2.5 6 Q2.5 2.5 6 2.5 L20.5 2.5 L26 7.5 L47 7.5 Q50.5 7.5 50.5 11 L50.5 37.5 Q50.5 40.5 47 40.5 L6 40.5 Q2.5 40.5 2.5 37 Z" fill="none" stroke="#bdbdbd" stroke-width="4.2" stroke-linejoin="round"/></svg>
<span id="w54" class="t" style="left:715.30px;top:803.15px;font-size:14px;line-height:18px;font-weight:400;color:#ececec;font-family:'Liberation Sans',sans-serif;transform:scaleX(1.0051);">Folder (1)</span>
<svg style="left:627px;top:881px" width="10" height="11" viewBox="0 0 10 11"><path d="M0 0 L10 5.5 L0 11Z" fill="#8a8a8a"/></svg>
<svg style="left:652.5px;top:865.5px" width="53" height="43" viewBox="0 0 53 43"><path d="M2.5 6 Q2.5 2.5 6 2.5 L20.5 2.5 L26 7.5 L47 7.5 Q50.5 7.5 50.5 11 L50.5 37.5 Q50.5 40.5 47 40.5 L6 40.5 Q2.5 40.5 2.5 37 Z" fill="none" stroke="#bdbdbd" stroke-width="4.2" stroke-linejoin="round"/></svg>
<span id="w55" class="t" style="left:715.30px;top:878.15px;font-size:14px;line-height:18px;font-weight:400;color:#c8c8c8;font-family:'Liberation Sans',sans-serif;transform:scaleX(1.0051);">Folder (2)</span>
<svg style="left:627px;top:956px" width="10" height="11" viewBox="0 0 10 11"><path d="M0 0 L10 5.5 L0 11Z" fill="#8a8a8a"/></svg>
<svg style="left:652.5px;top:940.5px" width="53" height="43" viewBox="0 0 53 43"><path d="M2.5 6 Q2.5 2.5 6 2.5 L20.5 2.5 L26 7.5 L47 7.5 Q50.5 7.5 50.5 11 L50.5 37.5 Q50.5 40.5 47 40.5 L6 40.5 Q2.5 40.5 2.5 37 Z" fill="none" stroke="#bdbdbd" stroke-width="4.2" stroke-linejoin="round"/></svg>
<span id="w56" class="t" style="left:715.30px;top:953.15px;font-size:14px;line-height:18px;font-weight:400;color:#c8c8c8;font-family:'Liberation Sans',sans-serif;transform:scaleX(1.0051);">Folder (3)</span>
<div class="a grid" style="left:995px;top:91px;width:908px;height:43px"></div>
<div class="a" style="left:995px;top:134px;width:908px;height:667px;background:#1c1c1c"></div>
<div class="a" style="left:1000px;top:135px;width:889px;height:666px;background:#ffffff"></div>
<div class="a" style="left:1889px;top:134px;width:14px;height:667px;background:#222"></div>
<div class="a" style="left:1895px;top:134px;width:8px;height:303px;background:#174a4b;border-radius:4px"></div>
<svg style="left:1012px;top:104px" width="22" height="17" viewBox="0 0 22 17"><path d="M1 0 V16 M21 0 V16" stroke="#bcbcbc" stroke-width="1.8"/><path d="M4 8 H18 M7.5 4.5 L4 8 L7.5 11.5 M14.5 4.5 L18 8 L14.5 11.5" stroke="#bcbcbc" stroke-width="2" fill="none"/></svg>
<svg style="left:1042px;top:103px" width="19" height="19" viewBox="0 0 19 19"><path d="M1 1 H18 V18 H1Z" stroke="#bcbcbc" stroke-width="2" stroke-dasharray="2 2" fill="none"/><rect x="5.5" y="5.5" width="8" height="8" stroke="#bcbcbc" stroke-width="2.2" fill="none"/></svg>
<svg style="left:1070px;top:102px" width="19" height="20" viewBox="0 0 19 20"><rect x="5" y="0" width="13" height="15.5" rx="2" fill="#bcbcbc"/><path d="M1.5 5 V18.5 H13.5" stroke="#bcbcbc" stroke-width="2" fill="none"/></svg>
<svg style="left:1099px;top:103px" width="19" height="18" viewBox="0 0 19 18"><rect x="0" y="0" width="19" height="18" rx="2" fill="#bcbcbc"/><path d="M3.5 13.5 L7 9.5 L9 11.5 L12 8 L16 13.5Z" fill="#1c1c1c"/></svg>
<svg style="left:1363px;top:107px" width="14" height="12" viewBox="0 0 14 12"><rect x="0" y="0" width="2" height="12" fill="#747474"/><path d="M14 0 L4 6 L14 12Z" fill="#747474"/></svg>
<svg style="left:1394px;top:106px" width="9" height="14" viewBox="0 0 9 14"><path d="M7.5 1 L2 7 L7.5 13" stroke="#747474" stroke-width="2" fill="none"/></svg>
<div class="a" style="left:1428px;top:99px;width:26px;height:25px;border:1px solid #555;border-radius:4px"></div>
<span class="t" style="left:1437.00px;top:103.35px;font-size:14px;line-height:18px;font-weight:400;color:#bbbbbb;font-family:'Liberation Sans',sans-serif;">1</span>
<span id="w57" class="t" style="left:1457.00px;top:103.35px;font-size:14px;line-height:18px;font-weight:400;color:#bbbbbb;font-family:'Liberation Sans',sans-serif;transform:scaleX(1.0913);">/ 3</span>
<svg style="left:1494px;top:106px" width="9" height="14" viewBox="0 0 9 14"><path d="M1.5 1 L7 7 L1.5 13" stroke="#bcbcbc" stroke-width="2" fill="none"/></svg>
<svg style="left:1521px;top:107px" width="14" height="12" viewBox="0 0 14 12"><path d="M0 0 L10 6 L0 12Z" fill="#bcbcbc"/><rect x="12" y="0" width="2" height="12" fill="#bcbcbc"/></svg>
<svg style="left:1789px;top:103px" width="21" height="18" viewBox="0 0 21 18"><rect x="4" y="0" width="13" height="4" fill="#bcbcbc"/><path d="M2 5 H19 Q21 5 21 7 V14 H17 V18 H4 V14 H0 V7 Q0 5 2 5Z" fill="#bcbcbc"/><rect x="6.5" y="11.5" width="8" height="4" fill="#1c1c1c"/><circle cx="16.5" cy="8.5" r="1" fill="#1c1c1c"/></svg>
<svg style="left:1818px;top:102px" width="20" height="20" viewBox="0 0 20 20"><circle cx="10" cy="10" r="10" fill="#bcbcbc"/><rect x="8.8" y="8" width="2.4" height="7.5" fill="#2a1a3a"/><rect x="8.8" y="4.5" width="2.4" height="2.2" fill="#2a1a3a"/></svg>
<div class="a" style="left:1848px;top:103px;width:1px;height:17px;background:#555"></div>
<svg style="left:1859px;top:104px" width="16" height="16" viewBox="0 0 16 16"><path d="M0 0 H3 L4 1 H7 V6 H0Z" fill="#f0b429"/><path d="M2.5 6 V13.5 H9 M2.5 9.5 H9" stroke="#bbb" stroke-width="0.9" fill="none"/><path d="M8.5 1.5 H13 L15 3.5 V7.5 H8.5Z" fill="#f2f2f2"/><path d="M8.5 9.5 H13 L15 11.5 V15.5 H8.5Z" fill="#f2f2f2"/></svg>
<svg style="left:1877px;top:108px" width="9" height="8" viewBox="0 0 9 8"><path d="M0 0 L8.5 0 L4.25 8Z" fill="#8a8a8a"/></svg>
<div class="dl" style="left:1130.5px;top:272.61px;">Form 88 (producers)</div>
<div class="dl" style="left:1130.5px;top:287.61px;">Paid Up/Pooling</div>
<div class="dl" style="left:1376.9px;top:317.21px;letter-spacing:0.1px"><b>OIL AND GAS LEASE</b></div>
<div class="dl dj" style="left:1156.7px;top:347.61px;width:598.8px;">THIS AGREEMENT, entered into this <span class="hl">6th</span> day of <span class="hl">November</span><span class="hl">2016</span>, between <span class="bu">Jeffrey Lee Thompson,</span> with address</div>
<div class="dl dj" style="left:1130.5px;top:362.61px;width:625.0px;">of <span class="hl">2985</span> Hartert Drive, Idaho Falls, ID <span class="hl">8340</span>4, hereinafter called Lessor, and <span class="bu">Peak Powder River Resources, LLC,</span></div>
<div class="dl" style="left:1130.5px;top:377.61px;">whose mailing address is <span class="hl">1910</span> Main Ave., Durango, CO <span class="hl">8130</span>1 hereinafter called Lessee, does witness:</div>
<div class="dl" style="left:1156.7px;top:407.61px;">1.</div>
<div class="dl dj" style="left:1183.3px;top:407.61px;width:572.2px;">That Lessor, for and in consideration of the sum of Ten Dollars in hand paid and of the covenants and</div>
<div class="dl dj" style="left:1130.5px;top:422.61px;width:625.0px;">agreements hereinafter contained to be performed by the Lessee, has this day granted, leased, and let and by these</div>
<div class="dl dj" style="left:1130.5px;top:437.61px;width:625.0px;">presents does hereby grant, lease, and let exclusively unto the Lessee the hereinafter described land, and with the right</div>
<div class="dl dj" style="left:1130.5px;top:452.61px;width:625.0px;">to pool this lease of any part thereof with other oil and gas leases as to all or any part of the lands covered thereby as</div>
<div class="dl dj" style="left:1130.5px;top:467.61px;width:625.0px;">hereinafter provided, for the purpose of carrying on geological, geophysical and other exploratory work, including core</div>
<div class="dl dj" style="left:1130.5px;top:482.61px;width:625.0px;">drilling, and the drilling, mining, and operating for, producing, and saving all of the oil, gas, casinghead gas,</div>
<div class="dl dj" style="left:1130.5px;top:497.61px;width:625.0px;">casinghead gasoline and all other gases and their respective constituent vapors, and for constructing roads, laying pipe</div>
<div class="dl dj" style="left:1130.5px;top:512.61px;width:625.0px;">lines, building tanks, storing oil, building power stations, telephone lines and other structures thereon necessary or</div>
<div class="dl dj" style="left:1130.5px;top:527.61px;width:625.0px;">convenient for the operating of said land alone or conjointly with neighboring lands, to produce, save, take care of, and</div>
<div class="dl dj" style="left:1130.5px;top:542.61px;width:625.0px;">manufacture all of such substances, and for housing and boarding employees, said tract of land with any reversionary</div>
<div class="dl" style="left:1130.5px;top:557.61px;">rights therein being situated in the County of <span class="bu">Campbell</span>, State of <span class="bu">Wyoming</span>, and described as follows:</div>
<div class="dl" style="left:1156.7px;top:588.21px;"><span class="bu">Township 42 North, Range 71 West, <span class="hl">6th</span> P.M.</span></div>
<div class="dl" style="left:1156.7px;top:618.21px;"><b>Section 7: SE/4NW/4, Lots 21 (42.26)</b></div>
<div class="dl" style="left:1156.7px;top:648.21px;"><b>Section 18: SE/4NW/4, NW/4SE/4, Lots 2 (38.20), 7 (41.91), 8 (39.88), 16 (41.59)</b></div>
<div class="dl" style="left:1156.7px;top:678.21px;">Limited to all depths below <span class="hl">2500</span>&#8217; below the surface of the earth or the base of the Ft Union Coal formation,</div>
<div class="dl" style="left:1156.7px;top:692.91px;">whichever is deeper</div>
<div class="dl" style="left:1156.7px;top:723.61px;">and containing <span class="bu">323.84</span> acres, more or less.</div>
<div class="dl dj" style="left:1156.7px;top:738.61px;width:598.8px;">This lease also covers and includes all land and interest in land owned or claimed by Lessor adjacent or</div>
<div class="dl dj" style="left:1130.5px;top:753.61px;width:625.0px;">contiguous to the land particularly described above, whether the same be in said section, township and range or in an</div>
<div class="dl dj" style="left:1130.5px;top:768.61px;width:625.0px;">adjacent section, township and range along with all right, title and interest Lessor <span class="hl">may</span> hereafter acquire in and to oil,</div>
<div class="a" style="left:1000px;top:786px;width:889px;height:15px;overflow:hidden">
<div class="dl dj" style="left:130.5px;top:-1.59px;width:625.0px;">gas and other minerals in and under any such lands (hereinafter, together with the lands described above, referred to</div>
</div>
<span id="w58" class="t" style="left:1010.80px;top:818.15px;font-size:14px;line-height:18px;font-weight:400;color:#9a9a9a;font-family:'Liberation Sans',sans-serif;transform:scaleX(1.0360);">25 results in 8 ms.</span>
<svg style="left:1868px;top:819px" width="14" height="20" viewBox="0 0 14 20"><rect x="0.5" y="0" width="13" height="2.5" fill="#c4c4c4"/><path d="M0.5 4 H13.5 L11 8 V20 H3 V8Z" fill="#c4c4c4"/><circle cx="7" cy="11" r="1.1" fill="#1e1e1e"/></svg>
<div class="a" style="left:995px;top:849px;width:908px;height:1px;background:#3a3a3a"></div>
<span id="w59" class="t" style="left:1008.00px;top:865.15px;font-size:14px;line-height:18px;font-weight:700;color:#bdbdbd;font-family:'Liberation Sans',sans-serif;transform:scaleX(1.0576);">Value</span>
<span id="w60" class="t" style="left:1307.00px;top:865.15px;font-size:14px;line-height:18px;font-weight:700;color:#bdbdbd;font-family:'Liberation Sans',sans-serif;transform:scaleX(0.9962);">Page No</span>
<span id="w61" class="t" style="left:1407.00px;top:865.15px;font-size:14px;line-height:18px;font-weight:700;color:#bdbdbd;font-family:'Liberation Sans',sans-serif;transform:scaleX(0.9815);">Span</span>
<span id="w62" class="t" style="left:1607.00px;top:865.15px;font-size:14px;line-height:18px;font-weight:700;color:#bdbdbd;font-family:'Liberation Sans',sans-serif;transform:scaleX(0.9497);">Confidence</span>
<span id="w63" class="t" style="left:1707.00px;top:865.15px;font-size:14px;line-height:18px;font-weight:700;color:#bdbdbd;font-family:'Liberation Sans',sans-serif;transform:scaleX(0.9986);">Source</span>
<div class="a" style="left:1003px;top:888px;width:885px;height:159px;overflow:hidden">
<div class="a" style="left:0px;top:2px;width:890px;height:29px;background:#282828;border:1px solid #a0a0a0;border-right:none;border-radius:5px 0 0 5px"></div>
<span class="t" style="left:5.00px;top:7.95px;font-size:14px;line-height:18px;font-weight:400;color:#e6e6e6;font-family:'Liberation Sans',sans-serif;">6th</span>
<span class="t" style="left:304.00px;top:7.95px;font-size:14px;line-height:18px;font-weight:400;color:#e6e6e6;font-family:'Liberation Sans',sans-serif;">1</span>
<span class="t" style="left:404.00px;top:7.95px;font-size:14px;line-height:18px;font-weight:400;color:#e6e6e6;font-family:'Liberation Sans',sans-serif;">92-94 (3)</span>
<span class="t" style="left:604.00px;top:7.95px;font-size:14px;line-height:18px;font-weight:400;color:#e6e6e6;font-family:'Liberation Sans',sans-serif;">100%</span>
<span class="t" style="left:704.00px;top:7.95px;font-size:14px;line-height:18px;font-weight:400;color:#e6e6e6;font-family:'Liberation Sans',sans-serif;">Day</span>
<div class="a" style="left:0px;top:31px;width:890px;height:29px;background:#282828;border:1px solid #5a5a5a;border-right:none;border-radius:5px 0 0 5px"></div>
<span class="t" style="left:5.00px;top:36.95px;font-size:14px;line-height:18px;font-weight:400;color:#e6e6e6;font-family:'Liberation Sans',sans-serif;">November</span>
<span class="t" style="left:304.00px;top:36.95px;font-size:14px;line-height:18px;font-weight:400;color:#e6e6e6;font-family:'Liberation Sans',sans-serif;">1</span>
<span class="t" style="left:404.00px;top:36.95px;font-size:14px;line-height:18px;font-weight:400;color:#e6e6e6;font-family:'Liberation Sans',sans-serif;">103-110 (8)</span>
<span class="t" style="left:604.00px;top:36.95px;font-size:14px;line-height:18px;font-weight:400;color:#e6e6e6;font-family:'Liberation Sans',sans-serif;">100%</span>
<span class="t" style="left:704.00px;top:36.95px;font-size:14px;line-height:18px;font-weight:400;color:#e6e6e6;font-family:'Liberation Sans',sans-serif;">Month</span>
<div class="a" style="left:0px;top:60px;width:890px;height:29px;background:#282828;border:1px solid #5a5a5a;border-right:none;border-radius:5px 0 0 5px"></div>
<span class="t" style="left:5.00px;top:65.95px;font-size:14px;line-height:18px;font-weight:400;color:#e6e6e6;font-family:'Liberation Sans',sans-serif;">2016</span>
<span class="t" style="left:304.00px;top:65.95px;font-size:14px;line-height:18px;font-weight:400;color:#e6e6e6;font-family:'Liberation Sans',sans-serif;">1</span>
<span class="t" style="left:404.00px;top:65.95px;font-size:14px;line-height:18px;font-weight:400;color:#e6e6e6;font-family:'Liberation Sans',sans-serif;">112-115 (4)</span>
<span class="t" style="left:604.00px;top:65.95px;font-size:14px;line-height:18px;font-weight:400;color:#e6e6e6;font-family:'Liberation Sans',sans-serif;">100%</span>
<span class="t" style="left:704.00px;top:65.95px;font-size:14px;line-height:18px;font-weight:400;color:#e6e6e6;font-family:'Liberation Sans',sans-serif;">Year</span>
<div class="a" style="left:0px;top:89px;width:890px;height:29px;background:#282828;border:1px solid #5a5a5a;border-right:none;border-radius:5px 0 0 5px"></div>
<span class="t" style="left:5.00px;top:94.95px;font-size:14px;line-height:18px;font-weight:400;color:#e6e6e6;font-family:'Liberation Sans',sans-serif;">2985</span>
<span class="t" style="left:304.00px;top:94.95px;font-size:14px;line-height:18px;font-weight:400;color:#e6e6e6;font-family:'Liberation Sans',sans-serif;">1</span>
<span class="t" style="left:404.00px;top:94.95px;font-size:14px;line-height:18px;font-weight:400;color:#e6e6e6;font-family:'Liberation Sans',sans-serif;">165-168 (4)</span>
<span class="t" style="left:604.00px;top:94.95px;font-size:14px;line-height:18px;font-weight:400;color:#e6e6e6;font-family:'Liberation Sans',sans-serif;">100%</span>
<span class="t" style="left:704.00px;top:94.95px;font-size:14px;line-height:18px;font-weight:400;color:#e6e6e6;font-family:'Liberation Sans',sans-serif;">Year</span>
<div class="a" style="left:0px;top:118px;width:890px;height:29px;background:#282828;border:1px solid #5a5a5a;border-right:none;border-radius:5px 0 0 5px"></div>
<span class="t" style="left:5.00px;top:123.95px;font-size:14px;line-height:18px;font-weight:400;color:#e6e6e6;font-family:'Liberation Sans',sans-serif;">8340</span>
<span class="t" style="left:304.00px;top:123.95px;font-size:14px;line-height:18px;font-weight:400;color:#e6e6e6;font-family:'Liberation Sans',sans-serif;">1</span>
<span class="t" style="left:404.00px;top:123.95px;font-size:14px;line-height:18px;font-weight:400;color:#e6e6e6;font-family:'Liberation Sans',sans-serif;">201-204 (4)</span>
<span class="t" style="left:604.00px;top:123.95px;font-size:14px;line-height:18px;font-weight:400;color:#e6e6e6;font-family:'Liberation Sans',sans-serif;">100%</span>
<span class="t" style="left:704.00px;top:123.95px;font-size:14px;line-height:18px;font-weight:400;color:#e6e6e6;font-family:'Liberation Sans',sans-serif;">Year</span>
<div class="a" style="left:0px;top:147px;width:890px;height:29px;background:#282828;border:1px solid #5a5a5a;border-right:none;border-radius:5px 0 0 5px"></div>
<span class="t" style="left:5.00px;top:152.95px;font-size:14px;line-height:18px;font-weight:400;color:#e6e6e6;font-family:'Liberation Sans',sans-serif;">1910</span>
<span class="t" style="left:304.00px;top:152.95px;font-size:14px;line-height:18px;font-weight:400;color:#e6e6e6;font-family:'Liberation Sans',sans-serif;">1</span>
<span class="t" style="left:404.00px;top:152.95px;font-size:14px;line-height:18px;font-weight:400;color:#e6e6e6;font-family:'Liberation Sans',sans-serif;">280-283 (4)</span>
<span class="t" style="left:604.00px;top:152.95px;font-size:14px;line-height:18px;font-weight:400;color:#e6e6e6;font-family:'Liberation Sans',sans-serif;">100%</span>
<span class="t" style="left:704.00px;top:152.95px;font-size:14px;line-height:18px;font-weight:400;color:#e6e6e6;font-family:'Liberation Sans',sans-serif;">Year</span>
</div>
<div class="a" style="left:1887px;top:890px;width:8px;height:34px;background:#174a4f;border-radius:4px"></div>
<div class="a" style="left:1003px;top:1047px;width:869px;height:8px;background:#174a4f;border-radius:4px"></div>
<div class="a" style="left:62px;top:177px;width:430px;height:98.5px;border:3px solid #ffff00;z-index:10"></div>
<div class="a" style="left:527px;top:188px;width:442px;height:32px;border:3px solid #ffff00;z-index:10"></div>
<svg style="left:0;top:0;z-index:11" width="1920" height="1080">
<defs><filter id="sh" x="-20%" y="-20%" width="140%" height="140%"><feGaussianBlur in="SourceAlpha" stdDeviation="2"/><feOffset dx="3" dy="3"/><feComponentTransfer><feFuncA type="linear" slope="0.7"/></feComponentTransfer><feMerge><feMergeNode/><feMergeNode in="SourceGraphic"/></feMerge></filter></defs>
<g filter="url(#sh)">
<path d="M240.5 248 L250.5 280.5 L243 280.5 L243 360 L238 360 L238 280.5 L230.5 280.5Z" fill="#f7941d"/>
<circle cx="239.6" cy="373.3" r="19.5" fill="#f7941d"/>
<rect x="72" y="374" width="335" height="146" fill="#f7941d"/>
</g>
<g filter="url(#sh)">
<path d="M961 205 L993 194.6 L993 202.3 L1070 202.3 L1070 207.7 L993 207.7 L993 214.9Z" fill="#f7941d"/>
<circle cx="1086.4" cy="204.7" r="19.75" fill="#f7941d"/>
<rect x="1086" y="138" width="319" height="132" fill="#f7941d"/>
</g>
</svg>
<span id="w64" class="t" style="left:234.50px;top:359.48px;font-size:22px;line-height:29px;font-weight:700;color:#ffffff;font-family:'Liberation Sans',sans-serif;transform:scaleX(0.8163);z-index:12">1</span>
<span id="w65" class="t" style="left:115.30px;top:389.48px;font-size:22px;line-height:29px;font-weight:700;color:#ffffff;font-family:'Liberation Sans',sans-serif;transform:scaleX(1.0338);z-index:12">Make a Data Type with</span>
<span id="w66" class="t" style="left:112.00px;top:417.58px;font-size:22px;line-height:29px;font-weight:700;color:#ffffff;font-family:'Liberation Sans',sans-serif;transform:scaleX(1.0245);z-index:12">child object that extract</span>
<span id="w67" class="t" style="left:103.50px;top:446.63px;font-size:22px;line-height:29px;font-weight:700;color:#ffffff;font-family:'Liberation Sans',sans-serif;transform:scaleX(1.0419);z-index:12">different parts of the text</span>
<span id="w68" class="t" style="left:89.00px;top:475.68px;font-size:22px;line-height:29px;font-weight:700;color:#ffffff;font-family:'Liberation Sans',sans-serif;transform:scaleX(1.0158);z-index:12">segment you wish to return.</span>
<span id="w69" class="t" style="left:1078.00px;top:190.88px;font-size:22px;line-height:29px;font-weight:700;color:#ffffff;font-family:'Liberation Sans',sans-serif;transform:scaleX(0.9796);z-index:12">2</span>
<span id="w70" class="t" style="left:1127.45px;top:145.38px;font-size:22px;line-height:29px;font-weight:700;color:#ffffff;font-family:'Liberation Sans',sans-serif;transform:scaleX(1.0165);z-index:12">Alternatively, you can</span>
<span id="w71" class="t" style="left:1106.60px;top:173.38px;font-size:22px;line-height:29px;font-weight:700;color:#ffffff;font-family:'Liberation Sans',sans-serif;transform:scaleX(1.0173);z-index:12">reference other extractors</span>
<span id="w72" class="t" style="left:1106.80px;top:202.58px;font-size:22px;line-height:29px;font-weight:700;color:#ffffff;font-family:'Liberation Sans',sans-serif;transform:scaleX(1.0116);z-index:12">in your project rather than</span>
<span id="w73" class="t" style="left:1133.50px;top:230.88px;font-size:22px;line-height:29px;font-weight:700;color:#ffffff;font-family:'Liberation Sans',sans-serif;transform:scaleX(1.0157);z-index:12">having child objects.</span>
</body></html>
